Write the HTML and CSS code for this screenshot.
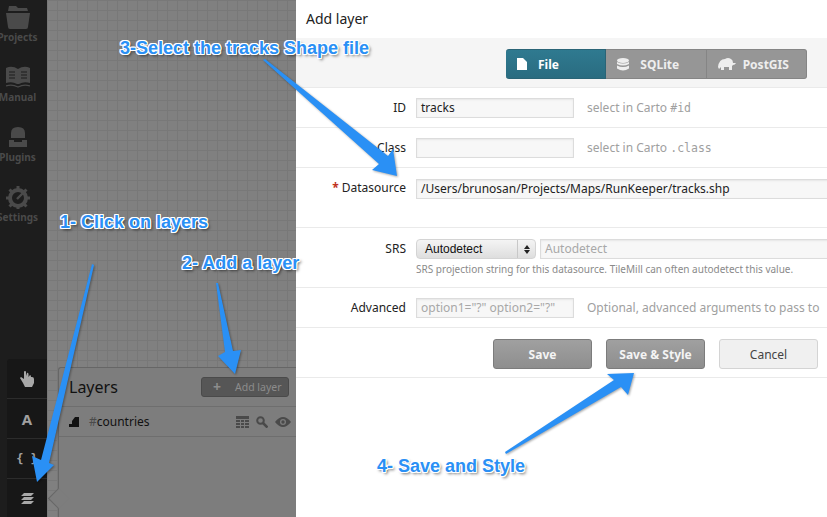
FILE: index.html
```html
<!DOCTYPE html>
<html lang="en">
<head>
    <meta charset="UTF-8">
    <title>TileMill - Add layer</title>
    <link rel="stylesheet" href="styles.css">
</head>
<body>
    <div class="app">
        <div class="sidebar">
            <div class="nav">
                <div class="nav-item">
                    <svg width="24" height="24" viewBox="0 0 24 24"><path fill="#4a4a4a" d="M2 6 L3 1 H10 L12 3 H21 L22 6 Z"/><path fill="#4a4a4a" d="M0 8 H24 L22 22 Q22 24 20 24 H4 Q2 24 2 22 Z"/></svg>
                    <span>Projects</span>
                </div>
                <div class="nav-item">
                    <svg width="24" height="24" viewBox="0 0 24 24"><path fill="#4a4a4a" d="M0 3 Q6 0 12 4 Q18 0 24 3 V18 Q18 16 13 19 H11 Q6 16 0 18 Z"/><path stroke="#1d1d1d" stroke-width="1.2" d="M3 7 H9 M3 10 H9 M3 13 H9 M15 7 H21 M15 10 H21 M15 13 H21"/><path stroke="#4a4a4a" stroke-width="1.2" fill="none" d="M0 21 Q6 19 12 22 Q18 19 24 21"/></svg>
                    <span>Manual</span>
                </div>
                <div class="nav-item">
                    <svg width="24" height="24" viewBox="0 0 24 24"><path fill="#4a4a4a" d="M5 8 Q5 2 12 2 Q19 2 19 8 V13 H5 Z"/><path fill="#4a4a4a" d="M3 15 H8 V17 H16 V15 H21 V22 H3 Z"/></svg>
                    <span>Plugins</span>
                </div>
                <div class="nav-item">
                    <svg width="24" height="24" viewBox="0 0 24 24"><circle cx="12" cy="13" r="8" fill="none" stroke="#4a4a4a" stroke-width="4"/><path stroke="#4a4a4a" stroke-width="3" d="M12 1 V5 M12 21 V24 M0 13 H4 M20 13 H24 M3.5 4.5 L6 7 M20.5 4.5 L18 7 M3.5 21.5 L6 19 M20.5 21.5 L18 19"/><path stroke="#4a4a4a" stroke-width="2.4" d="M11 14 L17 8"/></svg>
                    <span>Settings</span>
                </div>
            </div>
            <div class="tools">
                <div class="tool">
                    <svg width="14" height="16" viewBox="0 0 14 16"><path fill="#a8a8a8" d="M0 7 L1 6 L4 8 V1 Q4 0 5 0 Q6 0 6 1 V5 L7 2 Q8 1 8.500 3 V6 L10 4 Q11 4 11 6 L12 6 Q14 6 14 8 V12 L12 16 H5 L3 12 Z"/></svg>
                </div>
                <div class="tool tool-text">A</div>
                <div class="tool tool-text tool-mono">{ }</div>
                <div class="tool">
                    <svg width="13" height="12" viewBox="0 0 13 12"><path fill="#a8a8a8" d="M3 0 H13 L10 3 H0 Z M3 4 H13 L10 7 H0 Z M3 8 H13 L10 11 H0 Z"/></svg>
                </div>
            </div>
        </div>

        <div class="canvas">
            <div class="layers">
                <div class="layers-head">
                    <h3>Layers</h3>
                    <div class="add-layer"><span class="plus">+</span>Add layer</div>
                </div>
                <div class="layer-row">
                    <svg width="10" height="10" viewBox="0 0 10 10"><path fill="#111" d="M0 10 V7 H3 V4 L6 0 H10 V10 Z"/></svg>
                    <span class="layer-name"><em>#</em>countries</span>
                    <div class="layer-actions">
                        <svg width="13" height="12" viewBox="0 0 13 12"><path fill="#4a4a4a" d="M0 0 H13 V12 H0 Z"/><path stroke="#7c7c7c" d="M0 3.500 H13 M0 6.500 H13 M0 9.500 H13 M4.500 3 V12 M8.500 3 V12"/></svg>
                        <svg width="12" height="12" viewBox="0 0 12 12"><circle cx="4.500" cy="4.500" r="3.300" fill="none" stroke="#4a4a4a" stroke-width="2"/><path stroke="#4a4a4a" stroke-width="2.600" d="M7 7 L11.500 11.500"/></svg>
                        <svg width="16" height="10" viewBox="0 0 16 10"><path fill="#4a4a4a" d="M0 5 Q8 -5 16 5 Q8 15 0 5 Z"/><circle cx="8" cy="5" r="3" fill="#7c7c7c"/><circle cx="8" cy="5" r="1.700" fill="#4a4a4a"/></svg>
                    </div>
                </div>
            </div>
        </div>

        <div class="modal">
            <h2>Add layer</h2>
            <div class="tab-band">
                <div class="tabs">
                    <div class="tab active">
                        <svg width="10" height="12" viewBox="0 0 10 12"><path fill="#fff" d="M0 0 H6 L10 4 V12 H0 Z"/></svg>
                        File
                    </div>
                    <div class="tab">
                        <svg width="12" height="13" viewBox="0 0 12 13"><ellipse cx="6" cy="2.500" rx="6" ry="2.500" fill="#eee"/><path fill="#eee" d="M0 4 Q6 7 12 4 V6 Q6 9 0 6 Z M0 7.500 Q6 10.500 12 7.500 V10.500 Q6 14.500 0 10.500 Z"/></svg>
                        SQLite
                    </div>
                    <div class="tab">
                        <svg width="18" height="12" viewBox="0 0 18 12"><path fill="#eee" d="M0 9 Q1 1 7 1 Q10 -1 13 1 Q15 2 15 5 H18 Q17 7 15 7 L14 8 V12 H11 V9 H6 V12 H3 V9 L1 11 Z"/></svg>
                        PostGIS
                    </div>
                </div>
            </div>

            <div class="row">
                <label>ID</label>
                <div class="text-input short">tracks</div>
                <span class="hint">select in Carto <code>#id</code></span>
            </div>
            <div class="row">
                <label>Class</label>
                <div class="text-input short"></div>
                <span class="hint">select in Carto <code>.class</code></span>
            </div>
            <div class="row row-tall">
                <label><b class="req">*</b> Datasource</label>
                <div class="text-input long">/Users/brunosan/Projects/Maps/RunKeeper/tracks.shp</div>
            </div>
            <div class="row row-tall row-srs">
                <label>SRS</label>
                <div class="srs-field">
                    <div class="srs-top">
                        <div class="select">
                            <span class="select-value">Autodetect</span>
                            <span class="select-arrows"><i class="up"></i><i class="down"></i></span>
                        </div>
                        <div class="text-input srs-input">Autodetect</div>
                    </div>
                    <div class="srs-help">SRS projection string for this datasource. TileMill can often autodetect this value.</div>
                </div>
            </div>
            <div class="row">
                <label>Advanced</label>
                <div class="text-input short placeholder">option1="?" option2="?"</div>
                <span class="hint hint-nowrap">Optional, advanced arguments to pass to</span>
            </div>
            <div class="buttons">
                <div class="btn">Save</div>
                <div class="btn">Save &amp; Style</div>
                <div class="btn btn-light">Cancel</div>
            </div>
        </div>

        <!-- screenshot annotations drawn on top -->
        <svg class="arrows" width="827" height="517" viewBox="0 0 827 517">
            <g class="arrow-set">
                <polygon points="92,264 94,265 49,463 54,465 37,482 32,456 41,460"/>
                <polygon points="216,283 218,283 233,351 241,350 235,374 218,356 225,352"/>
                <polygon points="263,60 265,59 388,156 393,149 397,176 372,170 379,164"/>
                <polygon points="505,452 506,454 621,387 628,395 634,373 607,374 614,380"/>
            </g>
        </svg>
        <div class="note note-3">3-Select the tracks Shape file</div>
        <div class="note note-1">1- Click on layers</div>
        <div class="note note-2">2- Add a layer</div>
        <div class="note note-4">4- Save and Style</div>
    </div>
</body>
</html>
```

FILE: styles.css
```css
* { box-sizing: border-box; }
body { margin: 0; font-family: "Noto Sans", sans-serif; background: #fff; }
.app { position: relative; display: flex; width: 827px; height: 517px; overflow: hidden; }

/* left bar */
.sidebar { width: 47px; flex: none; background: #1d1d1d; display: flex; flex-direction: column; justify-content: space-between; }
.nav { width: 35px; padding-top: 5px; }
.nav-item { height: 60px; display: flex; flex-direction: column; align-items: center; gap: 1px; }
.nav-item span { font-size: 10px; font-weight: 700; line-height: 14px; color: #4a4a4a; white-space: nowrap; }
.tools { margin-left: 7px; height: 158px; background: #171717; border-radius: 3px 0 0 0; }
.tool { height: 40px; display: flex; align-items: center; justify-content: center; border-bottom: 1px solid #2c2c2c; }
.tool:last-child { border-bottom: none; }
.tool-text { font-size: 15px; font-weight: 700; color: #a0a0a0; }
.tool-mono { font-family: "DejaVu Sans Mono", monospace; font-size: 12px; }

/* map canvas */
.canvas {
    width: 249px; flex: none; display: flex; flex-direction: column; justify-content: flex-end;
    background-color: #808080;
    background-image: linear-gradient(#787878 1px, transparent 1px), linear-gradient(90deg, #787878 1px, transparent 1px);
    background-size: 10px 10px;
}
.layers { position: relative; height: 150px; margin-left: 11px; background: #7d7d7d; border-top: 1px solid #666; border-left: 1px solid #666; border-radius: 3px 0 0 0; }
.layers::before {
    content: ""; position: absolute; left: -8px; top: 123px; width: 14px; height: 14px;
    background: #7d7d7d; border-left: 1px solid #666; border-bottom: 1px solid #666; transform: rotate(45deg);
}
.layers-head { height: 39px; display: flex; align-items: center; justify-content: space-between; padding: 0 7px 0 10px; border-bottom: 1px solid #6e6e6e; }
.layers-head h3 { margin: 0; font-size: 16px; font-weight: 400; color: #111; }
.add-layer { width: 88px; height: 20px; display: flex; align-items: center; background: #565656; border: 1px solid #4a4a4a; border-radius: 3px; font-size: 10.500px; color: #8c8c8c; }
.plus { font-size: 14px; font-weight: 700; margin: 0 14px 0 11px; line-height: 14px; }
.layer-row { height: 30px; display: flex; align-items: center; padding-left: 10px; border-bottom: 1px solid #6e6e6e; position: relative; }
.layer-name { margin-left: 10px; font-size: 12px; color: #111; }
.layer-name em { font-style: normal; color: #4a4a4a; }
.layer-actions { margin-left: auto; display: flex; align-items: center; gap: 7px; padding-right: 5px; }

/* dialog */
.modal { width: 531px; flex: none; background: #fff; overflow: hidden; color: #222; }
.modal h2 { margin: 0; height: 38px; padding: 0 10px; font-size: 14px; font-weight: 400; line-height: 37px; color: #222; }
.tab-band { height: 50px; background: #f5f5f5; border-bottom: 1px solid #eaeaea; padding: 11px 20px 0 210px; }
.tabs { display: flex; width: 301px; height: 30px; }
.tab { flex: 1; display: flex; align-items: center; gap: 11px; padding-left: 11px; background: #969696; border: 1px solid #858585; border-left: none; color: #eee; font-size: 12px; font-weight: 700; }
.tab:last-child { border-radius: 0 3px 3px 0; gap: 7px; }
.tab.active { background: linear-gradient(#2f7a90, #2a6c80); border-color: #2a6476; border-radius: 3px 0 0 3px; color: #fff; padding-left: 11px; }

.row { height: 40px; display: flex; align-items: center; border-bottom: 1px solid #eaeaea; white-space: nowrap; }
.row-tall { height: 60px; align-items: flex-start; padding-top: 11px; }
.row label { width: 110px; flex: none; text-align: right; font-size: 12px; color: #222; }
.req { color: #c0301c; font-weight: 700; }
.text-input { height: 20px; margin-left: 10px; padding: 0 4px; font-size: 12px; line-height: 18px; color: #222; background: #f7f7f7; border: 1px solid #dcdcdc; box-shadow: inset 0 1px 2px #e6e6e6; }
.text-input.short { width: 158px; flex: none; }
.text-input.long { width: 500px; flex: none; }
.text-input.placeholder { color: #a8a8a8; overflow: hidden; }
.hint { margin-left: 13px; font-size: 12px; color: #a0a0a0; }
.hint code { font-family: "DejaVu Sans Mono", monospace; font-size: 11.500px; }

.srs-field { margin-left: 10px; }
.row-srs label { line-height: 20px; }
.srs-top { display: flex; gap: 4px; width: 500px; }
.srs-top .text-input { margin-left: 0; flex: 1; color: #a8a8a8; }
.select { width: 120px; height: 20px; display: flex; align-items: center; background: linear-gradient(#f4f4f4, #dedede); border: 1px solid #d4d4d4; border-radius: 4px; font-family: "Liberation Sans", sans-serif; font-size: 12px; color: #111; }
.select-value { flex: 1; padding-left: 8px; }
.select-arrows { width: 18px; height: 18px; display: flex; flex-direction: column; align-items: center; justify-content: center; gap: 1px; border-left: 1px solid #c8c8c8; }
.select-arrows i { width: 0; height: 0; border-left: 3px solid transparent; border-right: 3px solid transparent; }
.select-arrows .up { border-bottom: 4px solid #222; }
.select-arrows .down { border-top: 4px solid #222; }
.srs-help { margin-top: 1px; font-size: 10px; line-height: 18px; color: #8a8a8a; }

.buttons { height: 50px; padding: 11px 0 0 197px; display: flex; gap: 14px; border-bottom: 1px solid #eaeaea; }
.btn { width: 99px; height: 30px; display: flex; align-items: center; justify-content: center; background: linear-gradient(#a0a0a0, #8e8e8e); border: 1px solid #7c7c7c; border-radius: 3px; color: #f4f4f4; font-size: 12px; font-weight: 700; }
.btn-light { background: #f0f0f0; border-color: #d4d4d4; color: #444; font-weight: 400; }

/* annotations */
.arrows { position: absolute; left: 0; top: 0; pointer-events: none; }
.arrow-set polygon { fill: #2a90f5; }
.arrow-set { filter: drop-shadow(1px 1px 1px rgba(0,0,0,0.35)); }
.note {
    position: absolute; white-space: nowrap;
    font-family: "Liberation Sans", sans-serif; font-size: 18px; font-weight: 700; line-height: 20px; color: #2a90f5;
    text-shadow: 1px 0 0 #fff, -1px 0 0 #fff, 0 1px 0 #fff, 0 -1px 0 #fff, 1px 1px 0 #fff, -1px -1px 0 #fff, 1px -1px 0 #fff, -1px 1px 0 #fff, 2px 2px 3px rgba(0,0,0,0.6);
}
.note-3 { left: 120px; top: 38px; }
.note-1 { left: 60px; top: 212px; }
.note-2 { left: 182px; top: 253px; }
.note-4 { left: 377px; top: 456px; }
```
